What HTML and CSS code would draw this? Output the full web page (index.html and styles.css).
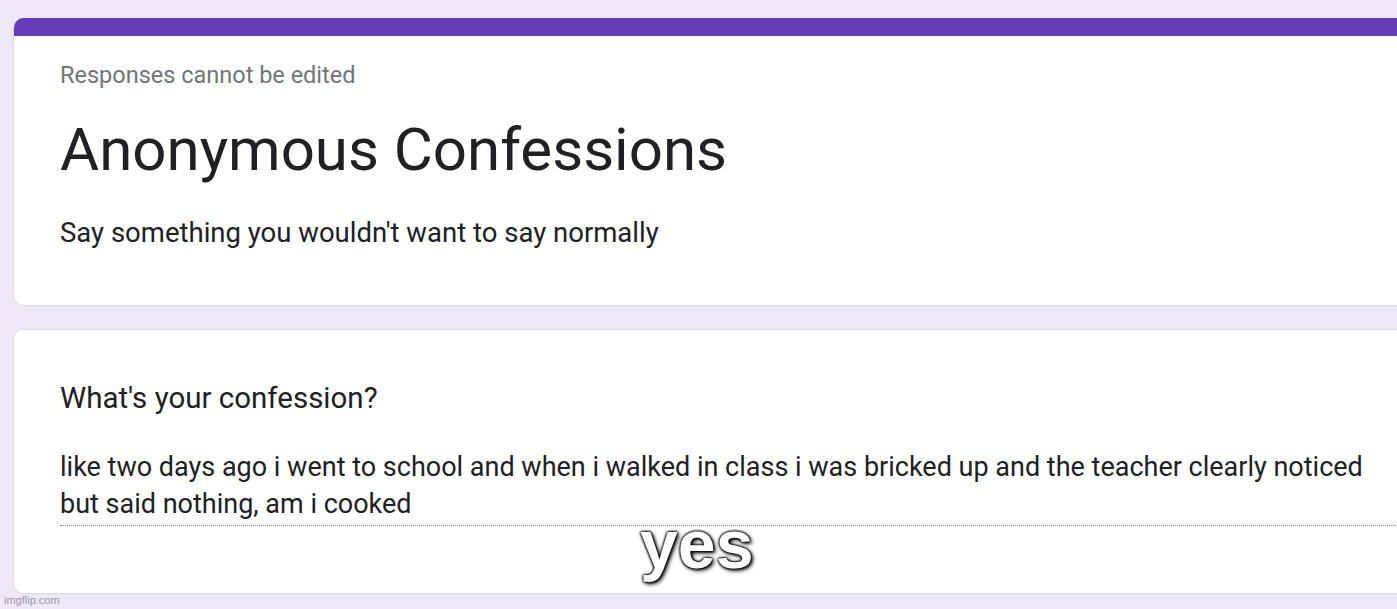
FILE: index.html
```html
<!DOCTYPE html>
<html lang="en">
  <head>
    <meta charset="UTF-8" />
    <title>Anonymous Confessions</title>
    <link rel="stylesheet" href="styles.css">
  </head>
  <body>
    <div class="page">
      <div class="card header-card">
        <div class="accent"></div>
        <div class="card-body">
          <p class="note">Responses cannot be edited</p>
          <h1 class="form-title">Anonymous Confessions</h1>
          <p class="form-desc">Say something you wouldn't want to say normally</p>
        </div>
      </div>

      <div class="card question-card">
        <div class="card-body">
          <h2 class="question">What's your confession?</h2>
          <div class="answer">like two days ago i went to school and when i walked in class i was bricked up and the teacher clearly noticed but said nothing, am i cooked</div>
        </div>
        <div class="caption">yes</div>
      </div>
    </div>
    <div class="watermark">imgflip.com</div>
  </body>
</html>
```

FILE: styles.css
```css
html,
body {
  margin: 0;
  padding: 0;
  height: 100%;
  overflow: hidden;
}

body {
  background-color: #ede7f6;
  font-family: Roboto, "Liberation Sans", Arial, sans-serif;
  color: #202124;
  position: relative;
}

.page {
  padding: 18px 0 0 13px;
  width: 1420px;
}

.card {
  background-color: #fff;
  border: 1px solid #dadce0;
  border-right: none;
  border-radius: 10px 0 0 10px;
  margin-bottom: 23px;
  position: relative;
  overflow: hidden;
}

.header-card {
  border-top: none;
  height: 287px;
}

.accent {
  height: 18px;
  background-color: #673ab7;
}

.card-body {
  padding: 0 0 0 46px;
}

.note {
  margin: 0;
  padding-top: 24px;
  font-size: 23.5px;
  line-height: 30px;
  color: #70757a;
}

.form-title {
  margin: 24px 0 0 0;
  font-size: 60px;
  font-weight: 400;
  line-height: 72px;
}

.form-desc {
  margin: 30px 0 0 0;
  font-size: 27.5px;
  line-height: 34px;
}

.question-card {
  height: 263px;
}

.question {
  margin: 0;
  padding-top: 49px;
  font-size: 29.5px;
  font-weight: 400;
  line-height: 38px;
}

.answer {
  margin-top: 32px;
  font-size: 27px;
  line-height: 37px;
  border-bottom: 1px dotted #80868b;
  padding-bottom: 2px;
  width: 1340px;
}

.caption {
  position: absolute;
  left: 626px;
  top: 180px;
  font-family: "Liberation Sans", Arial, sans-serif;
  font-size: 68px;
  font-weight: 700;
  color: #fff;
  line-height: 68px;
  text-shadow: 0 0 3px #000, 0 0 3px #000, 0 0 2px #000, 2px 2px 4px #000;
}

.watermark {
  position: absolute;
  left: 4px;
  bottom: 3px;
  font-family: "Liberation Sans", Arial, sans-serif;
  font-size: 11px;
  color: #9a98a8;
}
```
